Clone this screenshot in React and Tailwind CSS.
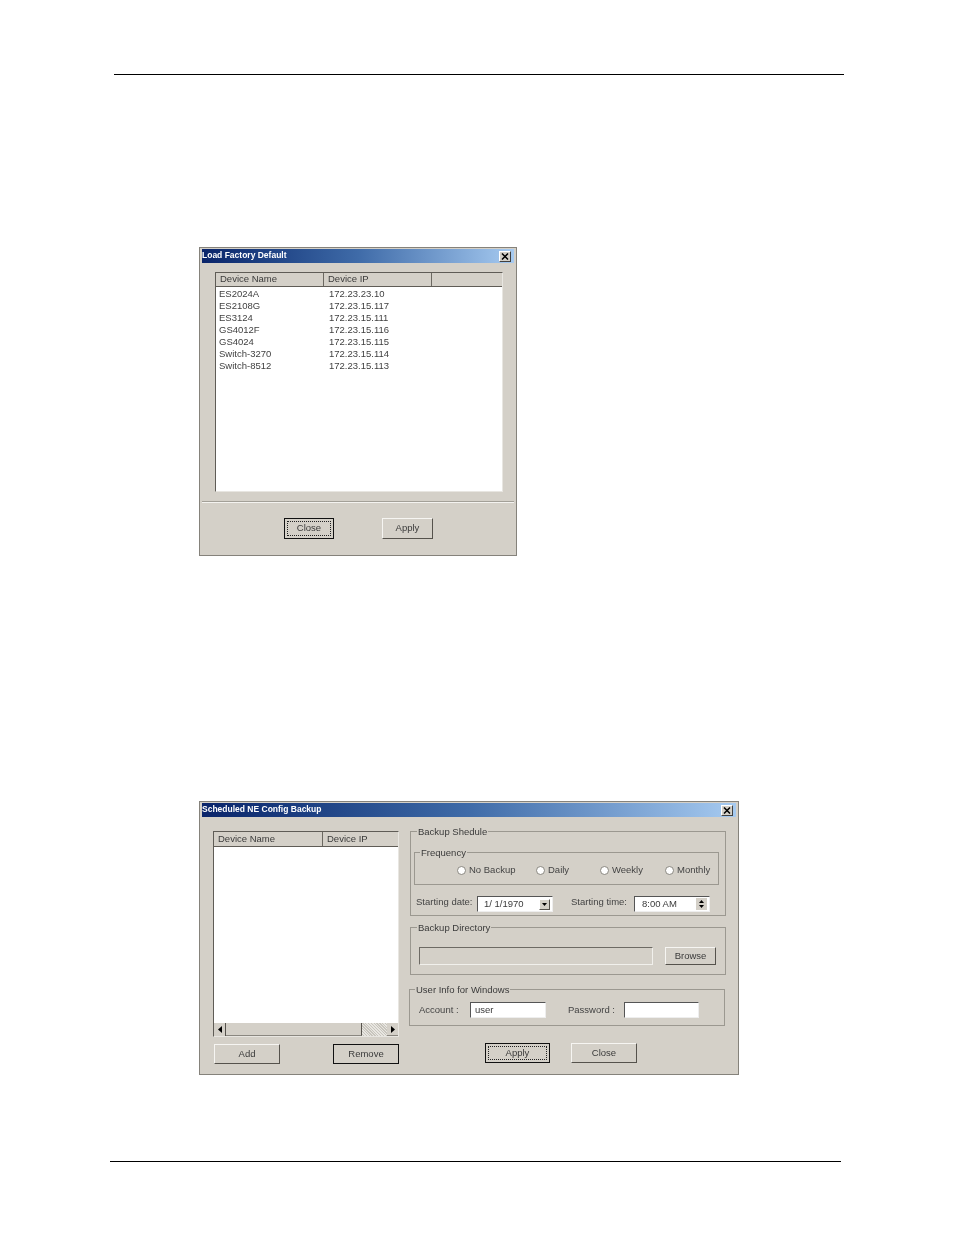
import React from "react";

function Btn({ w, focus, strong, children, h = "h-[21px]" }) {
  const edge = focus || strong
    ? "border border-[#111111]"
    : "border border-t-[#f6f5f2] border-l-[#f6f5f2] border-r-[#55524c] border-b-[#55524c]";
  return (
    <div className={`${w} ${h} ${edge} shrink-0 bg-[#d4d0c8] flex items-center justify-center p-[2px] text-[9.5px] text-[#3a3a3a]`}>
      <div className={`w-full h-full flex items-center justify-center ${focus ? "border border-dotted border-[#222222]" : ""}`}>{children}</div>
    </div>
  );
}

function Title({ text }) {
  return (
    <div className="h-[14px] shrink-0 mx-[2px] mt-[1px] bg-gradient-to-r from-[#0a246a] via-[#3f6ba8] to-[#a6caf0] flex items-center justify-between pr-[3px]">
      <span className="text-[8.5px] pb-[1px] font-bold text-white leading-none whitespace-nowrap">{text}</span>
      <span className="w-[12px] h-[11px] bg-[#d4d0c8] border border-t-white border-l-white border-r-[#404040] border-b-[#404040] flex items-center justify-center">
        <svg width="8" height="7" viewBox="0 0 8 7"><path d="M1 0.5 L7 6.5 M7 0.5 L1 6.5" stroke="#000" strokeWidth="1.5" /></svg>
      </span>
    </div>
  );
}

function HeadCell({ w, children }) {
  return (
    <div className={`${w} h-full shrink-0 border-r border-r-[#6b6861] pl-[4px] flex items-center text-[9.5px] text-[#3a3a3a] whitespace-nowrap`}>
      {children}
    </div>
  );
}

function Group({ label, className, legend = "ml-[3px]", children }) {
  return (
    <fieldset className={`border border-[#9b9890] min-w-0 ${className}`}>
      <legend className={`${legend} px-[1px] text-[9.5px] leading-[11px] text-[#3a3a3a] whitespace-nowrap`}>{label}</legend>
      {children}
    </fieldset>
  );
}

function Radio({ w, label }) {
  return (
    <div className={`${w} flex items-center gap-[3px] text-[9.5px] text-[#444444] whitespace-nowrap`}>
      <span className="w-[9px] h-[9px] rounded-full bg-white border border-[#8a8780] shrink-0" />
      {label}
    </div>
  );
}

const inputCls = "bg-white border border-t-[#555555] border-l-[#555555] border-r-[#eeeeee] border-b-[#eeeeee] shrink-0 flex items-center text-[9.5px] text-[#3a3a3a]";

const devices = [
  ["ES2024A", "172.23.23.10"],
  ["ES2108G", "172.23.15.117"],
  ["ES3124", "172.23.15.111"],
  ["GS4012F", "172.23.15.116"],
  ["GS4024", "172.23.15.115"],
  ["Switch-3270", "172.23.15.114"],
  ["Switch-8512", "172.23.15.113"],
];

export default function App() {
  return (
    <div className="w-[954px] h-[1235px] bg-white overflow-hidden pt-[74px] font-['Liberation_Sans',sans-serif]">
      <div className="ml-[114px] w-[730px] h-px bg-black" />

      {/* Load Factory Default */}
      <div className="ml-[199px] mt-[172px] w-[318px] h-[309px] bg-[#d4d0c8] border border-[#85827b] flex flex-col blur-[0.3px]">
        <Title text="Load Factory Default" />
        <div className="ml-[15px] mt-[9px] w-[288px] h-[220px] bg-white border border-t-[#5f5c56] border-l-[#5f5c56] border-r-[#e8e6e1] border-b-[#e8e6e1] flex flex-col">
          <div className="h-[14px] shrink-0 bg-[#d4d0c8] border-b border-b-[#5f5c56] flex">
            <HeadCell w="w-[108px]">Device Name</HeadCell>
            <HeadCell w="w-[108px]">Device IP</HeadCell>
          </div>
          <div className="pt-[1px] pl-[3px]">
            {devices.map(([n, ip]) => (
              <div key={n} className="h-[12px] flex items-center text-[9.5px] text-[#3f3f3f] whitespace-nowrap">
                <span className="w-[110px]">{n}</span>
                <span>{ip}</span>
              </div>
            ))}
          </div>
        </div>
        <div className="mt-[9px] mx-[2px] h-[2px] border-t border-t-[#a3a098] border-b border-b-[#f4f3f0]" />
        <div className="mt-[15px] ml-[84px] flex gap-[48px]">
          <Btn w="w-[50px]" focus>Close</Btn>
          <Btn w="w-[51px]">Apply</Btn>
        </div>
      </div>

      {/* Scheduled NE Config Backup */}
      <div className="ml-[199px] mt-[245px] w-[540px] h-[274px] bg-[#d4d0c8] border border-[#85827b] flex flex-col blur-[0.3px]">
        <Title text="Scheduled NE Config Backup" />
        <div className="flex flex-1">
          {/* left column */}
          <div className="ml-[13px] mt-[14px] w-[186px] shrink-0">
            <div className="h-[206px] bg-white border border-t-[#5f5c56] border-l-[#5f5c56] border-r-[#e8e6e1] border-b-[#e8e6e1] flex flex-col">
              <div className="h-[15px] shrink-0 bg-[#d4d0c8] border-b border-b-[#5f5c56] flex">
                <HeadCell w="w-[109px]">Device Name</HeadCell>
                <div className="pl-[4px] flex items-center text-[9.5px] text-[#3a3a3a]">Device IP</div>
              </div>
              <div className="flex-1" />
              <div className="h-[13px] shrink-0 flex bg-[#d4d0c8]">
                <div className="w-[12px] border-r border-r-[#55524c] flex items-center justify-center">
                  <svg width="4" height="7" viewBox="0 0 4 7"><path d="M4 0 L0 3.5 L4 7 Z" fill="#000" /></svg>
                </div>
                <div className="w-[136px] border-r border-r-[#55524c] border-b border-b-[#8a8780]" />
                <div className="w-[25px] bg-[repeating-linear-gradient(45deg,#e8e6e1_0,#e8e6e1_1px,#c8c5bd_1px,#c8c5bd_2px)]" />
                <div className="flex-1 flex items-center justify-center border-b border-b-[#8a8780]">
                  <svg width="4" height="7" viewBox="0 0 4 7"><path d="M0 0 L4 3.5 L0 7 Z" fill="#000" /></svg>
                </div>
              </div>
            </div>
            <div className="mt-[7px] ml-px flex justify-between">
              <Btn w="w-[66px]" h="h-[20px]">Add</Btn>
              <Btn w="w-[66px]" h="h-[20px]" strong>Remove</Btn>
            </div>
          </div>

          {/* right column */}
          <div className="ml-[10px] w-[317px] shrink-0 mt-[9px] flex flex-col">
            <Group label="Backup Shedule" className="ml-px w-[316px] h-[90px] px-[3px]">
              <Group label="Frequency" legend="ml-[5px]" className="w-[305px] h-[38px] mt-[10px]">
                <div className="flex pl-[42px] pt-[5px]">
                  <Radio w="w-[79px]" label="No Backup" />
                  <Radio w="w-[64px]" label="Daily" />
                  <Radio w="w-[65px]" label="Weekly" />
                  <Radio w="w-[50px]" label="Monthly" />
                </div>
              </Group>
              <div className="flex items-center mt-[10px] text-[9.5px] text-[#444444] whitespace-nowrap">
                <span className="ml-[2px] w-[61px] pb-[4px]">Starting date:</span>
                <div className={`${inputCls} w-[76px] h-[16px] pl-[6px] justify-between pr-[2px]`}>
                  <span>1/ 1/1970</span>
                  <span className="w-[11px] h-[11px] bg-[#d4d0c8] border border-t-white border-l-white border-r-[#55524c] border-b-[#55524c] flex items-center justify-center">
                    <svg width="5" height="3" viewBox="0 0 5 3"><path d="M0 0 H5 L2.5 3 Z" fill="#000" /></svg>
                  </span>
                </div>
                <span className="ml-[18px] w-[63px] pb-[4px]">Starting time:</span>
                <div className={`${inputCls} w-[76px] h-[16px] pl-[7px] justify-between pr-[2px]`}>
                  <span>8:00 AM</span>
                  <span className="w-[11px] h-[12px] flex flex-col items-center justify-center gap-[2px] bg-[#d4d0c8]">
                    <svg width="5" height="3" viewBox="0 0 5 3"><path d="M0 3 H5 L2.5 0 Z" fill="#000" /></svg>
                    <svg width="5" height="3" viewBox="0 0 5 3"><path d="M0 0 H5 L2.5 3 Z" fill="#000" /></svg>
                  </span>
                </div>
              </div>
            </Group>

            <Group label="Backup Directory" legend="ml-[6px]" className="ml-px mt-[6px] w-[316px] h-[53px]">
              <div className="flex items-center mt-[14px] ml-[8px]">
                <div className="w-[234px] h-[18px] border border-t-[#6d6a64] border-l-[#6d6a64] border-r-[#f1f0ec] border-b-[#f1f0ec]" />
                <div className="ml-[12px]">
                  <Btn w="w-[51px]" h="h-[18px]">Browse</Btn>
                </div>
              </div>
            </Group>

            <Group label="User Info for Windows" className="mt-[9px] w-[316px] h-[42px]" legend="ml-[5px]">
              <div className="flex items-center mt-[7px] text-[9.5px] text-[#444444] whitespace-nowrap">
                <span className="ml-[9px] w-[51px]">Account :</span>
                <div className={`${inputCls} w-[76px] h-[16px] pl-[4px]`}>user</div>
                <span className="ml-[22px] w-[56px]">Password :</span>
                <div className={`${inputCls} w-[75px] h-[16px]`} />
              </div>
            </Group>

            <div className="mt-[17px] ml-[76px] flex gap-[21px]">
              <Btn w="w-[65px]" h="h-[20px]" focus>Apply</Btn>
              <Btn w="w-[66px]" h="h-[20px]">Close</Btn>
            </div>
          </div>
        </div>
      </div>

      <div className="ml-[110px] mt-[86px] w-[731px] h-px bg-black" />
    </div>
  );
}
